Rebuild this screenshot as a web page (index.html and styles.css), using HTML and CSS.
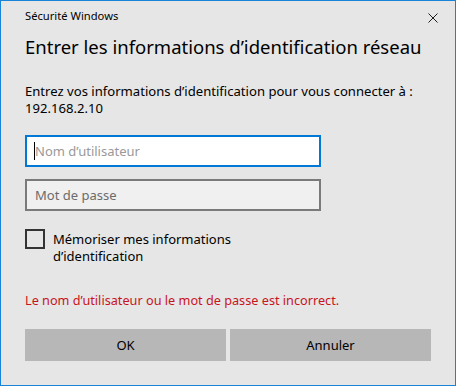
FILE: index.html
```html
<!DOCTYPE html>
<html lang="fr">
  <head>
    <meta charset="UTF-8" />
    <meta name="viewport" content="width=device-width, initial-scale=1.0" />
    <title>Sécurité Windows</title>
    <link rel="stylesheet" href="styles.css">
  </head>
  <body>
    <section class="dialog">
      <header class="dialog-titlebar">
        <span class="dialog-app">Sécurité Windows</span>
        <button type="button" class="dialog-close" aria-label="Fermer">
          <svg width="10" height="10" viewBox="0 0 10 10">
            <path d="M0.5,0.5 L9.5,9.5 M9.5,0.5 L0.5,9.5" stroke="#1f1f1f" stroke-width="1" fill="none"></path>
          </svg>
        </button>
      </header>

      <h1 class="dialog-heading">Entrer les informations d’identification réseau</h1>

      <p class="dialog-message">
        Entrez vos informations d’identification pour vous connecter à :<br />
        192.168.2.10
      </p>

      <div class="field field-focus">
        <span class="field-caret"></span>
        <span class="field-placeholder">Nom d’utilisateur</span>
      </div>
      <div class="field field-password">
        <span class="field-placeholder">Mot de passe</span>
      </div>

      <label class="remember">
        <span class="remember-box"></span>
        <span class="remember-text">Mémoriser mes informations<br />d’identification</span>
      </label>

      <p class="dialog-error">Le nom d’utilisateur ou le mot de passe est incorrect.</p>

      <div class="dialog-actions">
        <button type="button" class="dialog-button">OK</button>
        <button type="button" class="dialog-button">Annuler</button>
      </div>
    </section>
  </body>
</html>
```

FILE: styles.css
```css
html {
  box-sizing: border-box;
  font-family: 'Noto Sans', 'Open Sans', sans-serif;
}
*,
*::after,
*::before {
  box-sizing: inherit;
}

body {
  margin: 0;
  background-color: #fff;
  color: #000;
}

.dialog {
  width: 456px;
  height: 386px;
  background-color: #e6e6e6;
  border: 1px solid #1883d7;
  padding: 0 24px;
  font-size: 13px;
  line-height: 17px;
}

.dialog-titlebar {
  display: flex;
  justify-content: space-between;
  align-items: flex-start;
  padding-top: 7px;
  height: 24px;
}

.dialog-app {
  font-size: 11.2px;
  line-height: 16px;
  color: #000;
}

.dialog-close {
  background: none;
  border: none;
  padding: 0;
  margin: 5px -7px 0 0;
  width: 10px;
  height: 10px;
  display: block;
}

.dialog-close svg {
  display: block;
}

.dialog-heading {
  margin: 9px 0 0;
  font-size: 18.5px;
  font-weight: 400;
  line-height: 26px;
  white-space: nowrap;
  color: #000;
}

.dialog-message {
  margin: 23px 0 0;
  font-size: 13.1px;
  color: #000;
}

.field {
  display: flex;
  align-items: center;
  height: 32px;
  width: 296px;
  margin-top: 18px;
  padding: 0 8px;
  border: 2px solid #7a7a7a;
  background-color: #f0f0f0;
}

.field-focus {
  background-color: #fff;
  border-color: #0078d7;
}

.field-password {
  margin-top: 12px;
}

.field-caret {
  width: 1px;
  height: 18px;
  background-color: #000;
  margin-left: -1px;
}

.field-placeholder {
  color: #6b6b6b;
}

.field-focus .field-placeholder {
  color: #999;
}

.remember {
  display: flex;
  align-items: flex-start;
  gap: 8px;
  margin-top: 18px;
}

.remember-box {
  width: 20px;
  height: 20px;
  border: 2px solid #333;
  flex: none;
}

.remember-text {
  margin-top: 2px;
}

.dialog-error {
  margin: 27px 0 0;
  font-size: 12.7px;
  color: #c8141c;
}

.dialog-actions {
  display: grid;
  grid-template-columns: 1fr 1fr;
  gap: 4px;
  margin-top: 20px;
  width: 406px;
}

.dialog-button {
  height: 32px;
  border: none;
  background-color: #b7b7b7;
  font-family: inherit;
  font-size: 13px;
  color: #000;
  padding: 0;
}
```
